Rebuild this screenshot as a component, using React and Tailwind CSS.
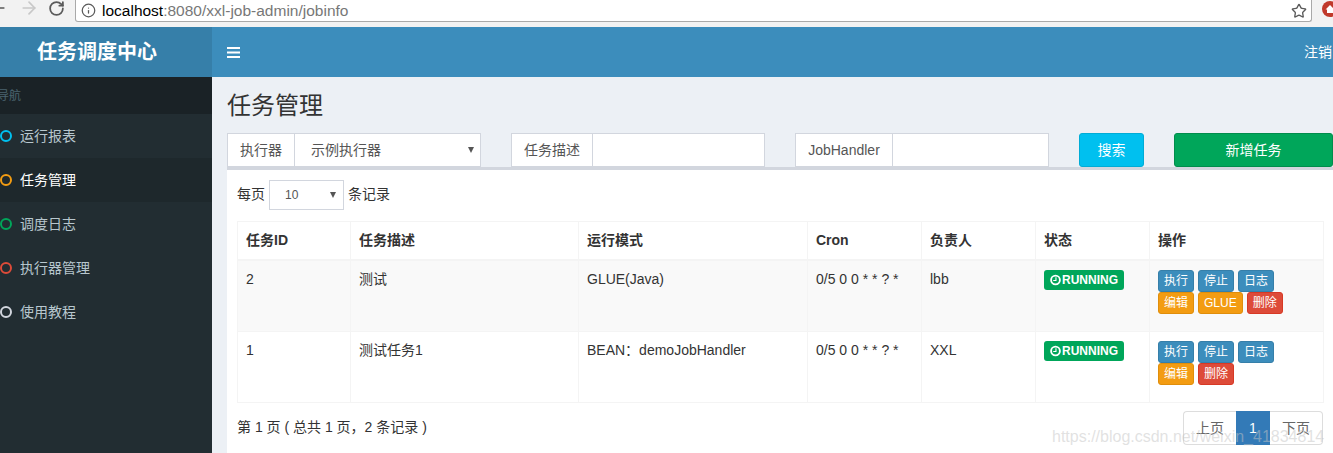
import React from "react";
import { ArrowLeft, ArrowRight, RotateCw, Info, Star } from "lucide-react";

const FONT = { fontFamily: '"Liberation Sans", "Noto Sans CJK SC", sans-serif' };

const NAV = [
  { label: "运行报表", ring: "border-[#00c0ef]" },
  { label: "任务管理", ring: "border-[#f39c12]", active: true },
  { label: "调度日志", ring: "border-[#00a65a]" },
  { label: "执行器管理", ring: "border-[#dd4b39]" },
  { label: "使用教程", ring: "border-[#d2d6de]" },
];

const ROWS = [
  { id: "2", desc: "测试", mode: "GLUE(Java)", cron: "0/5 0 0 * * ? *", owner: "lbb", glue: true, striped: true, height: "h-[72px]" },
  { id: "1", desc: "测试任务1", mode: "BEAN：demoJobHandler", cron: "0/5 0 0 * * ? *", owner: "XXL", glue: false, striped: false, height: "h-[71px]" },
];

function BrowserBar() {
  return (
    <div className="h-[27px] shrink-0 bg-[#f2f2f2] flex items-start relative">
      <ArrowLeft size={20} className="text-[#5a5a5a] absolute left-[-12px] top-[-2px]" />
      <ArrowRight size={20} className="text-[#c8c8c8] absolute left-[19px] top-[-2px]" />
      <RotateCw size={17} strokeWidth={2.5} className="text-[#5a5a5a] absolute left-[48px] top-0" />
      <div className="ml-[75px] w-[1237px] h-[22px] bg-white border-r border-b border-l border-[#a9a9a9] rounded-b-[3px] flex items-center pl-[5px]">
        <Info size={15} className="text-[#5a5a5a] mr-[6px]" />
        <span className="text-[15.5px] text-black">localhost</span>
        <span className="text-[15.5px] text-[#777]">:8080/xxl-job-admin/jobinfo</span>
        <Star size={16} strokeWidth={2} className="text-[#5a5a5a] ml-auto mr-[4px]" />
      </div>
      <div className="absolute left-[1322px] top-[1px] w-[16px] h-[16px] rounded-full bg-[#c0392b] flex items-center justify-center">
        <svg width="10" height="10" viewBox="0 0 10 10" fill="white">
          <path d="M5 1 9.5 5.5H8V9H2V5.5H.5z" />
        </svg>
      </div>
    </div>
  );
}

function Sidebar() {
  return (
    <aside className="w-[212px] shrink-0 flex flex-col bg-[#222d32]">
      <div className="h-[50px] bg-[#367fa9] text-white text-[20px] font-bold flex items-center justify-center pr-[18px]">
        任务调度中心
      </div>
      <div className="h-[37px] bg-[#1a2226] text-[#4b646f] text-[12px] flex items-center ml-[-3px]">导航</div>
      {NAV.map((item) => (
        <div
          key={item.label}
          className={`h-[44px] flex items-center text-[14px] ${item.active ? "bg-[#1e282c] text-white" : "text-[#b8c7ce]"}`}
        >
          <span className={`w-[12px] h-[12px] rounded-full border-[2.5px] mr-[8px] ${item.ring}`} />
          {item.label}
        </div>
      ))}
    </aside>
  );
}

function FilterGroup({ label, labelWidth, children }) {
  return (
    <div className="w-[254px] h-[34px] shrink-0 flex bg-white border border-[#d2d6de]">
      <div className={`${labelWidth} shrink-0 border-r border-[#d2d6de] flex items-center justify-center text-[14px] text-[#555]`}>
        {label}
      </div>
      <div className="flex-1 flex items-center">{children}</div>
    </div>
  );
}

function Btn({ color, children }) {
  return (
    <button className={`h-[22px] px-[5px] text-[12px] leading-none text-white rounded-[3px] border ${color}`}>
      {children}
    </button>
  );
}

const BLUE = "bg-[#3c8dbc] border-[#367fa9]";
const ORANGE = "bg-[#f39c12] border-[#e08e0b]";
const RED = "bg-[#dd4b39] border-[#d73925]";

function Th({ children }) {
  return <th className="border border-[#f4f4f4] border-b-2 h-[38px] px-[8px] text-left text-[14px] font-bold text-[#333]">{children}</th>;
}

function Td({ height, children }) {
  return <td className={`border border-[#f4f4f4] ${height} p-[8px] align-top text-[14px] leading-[20px] text-[#333]`}>{children}</td>;
}

function JobRow({ row }) {
  const h = row.height;
  return (
    <tr className={row.striped ? "bg-[#f9f9f9]" : "bg-white"}>
      <Td height={h}>{row.id}</Td>
      <Td height={h}>{row.desc}</Td>
      <Td height={h}>{row.mode}</Td>
      <Td height={h}>{row.cron}</Td>
      <Td height={h}>{row.owner}</Td>
      <Td height={h}>
        <span className="mt-[1px] flex items-center h-[20px] w-[80px] px-[6px] bg-[#00a65a] text-white text-[12px] font-bold rounded-[3px] gap-[1px]">
          <svg width="12" height="12" viewBox="0 0 12 12" fill="none" stroke="white" strokeWidth="2">
            <circle cx="6" cy="6" r="4.8" />
            <path d="M6.5 3v3.5H3.5" strokeWidth="1.2" />
          </svg>
          RUNNING
        </span>
      </Td>
      <Td height={h}>
        <div className="mt-[1px] flex flex-wrap gap-x-[4px] w-[150px]">
          <Btn color={BLUE}>执行</Btn>
          <Btn color={BLUE}>停止</Btn>
          <Btn color={BLUE}>日志</Btn>
          <Btn color={ORANGE}>编辑</Btn>
          {row.glue && <Btn color={ORANGE}>GLUE</Btn>}
          <Btn color={RED}>删除</Btn>
        </div>
      </Td>
    </tr>
  );
}

function Content() {
  return (
    <main className="flex-1 min-w-0 flex flex-col bg-[#ecf0f5]">
      <div className="h-[50px] shrink-0 bg-[#3c8dbc] flex items-center text-white">
        <svg width="13" height="11" viewBox="0 0 13 11" fill="white" className="ml-[15px]">
          <rect width="13" height="2" />
          <rect y="4.5" width="13" height="2" />
          <rect y="9" width="13" height="2" />
        </svg>
        <span className="ml-auto text-[14px] w-[29px] overflow-hidden whitespace-nowrap">注销</span>
      </div>
      <div className="pl-[15px] flex flex-col flex-1 min-h-0">
        <h1 className="mt-[13px] h-[32px] text-[24px] leading-[32px] font-normal text-[#333]">任务管理</h1>
        <div className="mt-[11px] flex gap-[30px]">
          <FilterGroup label="执行器" labelWidth="w-[67px]">
            <span className="ml-[16px] text-[14px] text-[#555]">示例执行器</span>
            <span className="ml-auto mr-[6px] w-0 h-0 border-x-[3.5px] border-t-[6px] border-x-transparent border-t-[#555]" />
          </FilterGroup>
          <FilterGroup label="任务描述" labelWidth="w-[81px]" />
          <FilterGroup label="JobHandler" labelWidth="w-[97px]" />
          <button className="w-[65px] h-[34px] shrink-0 bg-[#00c0ef] border border-[#00acd6] rounded-[3px] text-white text-[14px]">搜索</button>
          <button className="w-[159px] h-[34px] shrink-0 bg-[#00a65a] border border-[#008d4c] rounded-[3px] text-white text-[14px]">新增任务</button>
        </div>
        <section className="flex-1 bg-white border-t-[3px] border-[#d2d6de] px-[10px] min-h-0">
          <div className="mt-[10px] h-[30px] flex items-center text-[14px] text-[#333]">
            <span className="mt-[-2px]">每页</span>
            <div className="ml-[4px] mr-[4px] w-[75px] h-[30px] border border-[#d2d6de] flex items-center pl-[15px] text-[12px] text-[#555]">
              10
              <span className="ml-auto mr-[7px] w-0 h-0 border-x-[3.5px] border-t-[6px] border-x-transparent border-t-[#555]" />
            </div>
            <span className="mt-[-2px]">条记录</span>
          </div>
          <table className="mt-[11px] w-[1086px] table-fixed border-collapse">
            <colgroup>
              <col className="w-[113px]" />
              <col className="w-[228px]" />
              <col className="w-[229px]" />
              <col className="w-[114px]" />
              <col className="w-[114px]" />
              <col className="w-[114px]" />
              <col className="w-[174px]" />
            </colgroup>
            <thead>
              <tr>
                <Th>任务ID</Th>
                <Th>任务描述</Th>
                <Th>运行模式</Th>
                <Th>Cron</Th>
                <Th>负责人</Th>
                <Th>状态</Th>
                <Th>操作</Th>
              </tr>
            </thead>
            <tbody>
              {ROWS.map((row) => (
                <JobRow key={row.id} row={row} />
              ))}
            </tbody>
          </table>
          <div className="mt-[8px] flex items-center justify-between w-[1086px] text-[14px] text-[#333]">
            <span className="mt-[-2px]">第 1 页 ( 总共 1 页，2 条记录 )</span>
            <div className="flex h-[34px]">
              <div className="w-[53px] border border-r-0 border-[#ddd] rounded-l-[4px] flex items-center justify-center text-[#666]">上页</div>
              <div className="w-[34px] bg-[#337ab7] text-white flex items-center justify-center">1</div>
              <div className="w-[53px] border border-l-0 border-[#ddd] rounded-r-[4px] flex items-center justify-center text-[#666]">下页</div>
            </div>
          </div>
        </section>
      </div>
    </main>
  );
}

export default function App() {
  return (
    <div className="w-[1333px] h-[453px] overflow-hidden flex flex-col relative" style={FONT}>
      <BrowserBar />
      <div className="flex flex-1 min-h-0">
        <Sidebar />
        <Content />
      </div>
      <span className="absolute left-[1052px] top-[425px] text-[16px] text-[#c4c4c4]/50 whitespace-nowrap">
        https://blog.csdn.net/weixin_41834814
      </span>
    </div>
  );
}
